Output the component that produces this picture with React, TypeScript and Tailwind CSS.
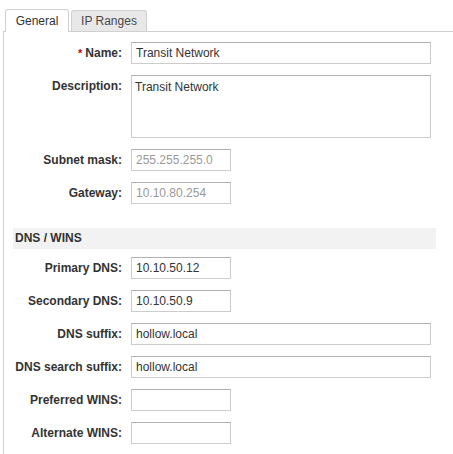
import React from 'react'

type Field = {
  label: string
  value?: string
  wide?: boolean
  disabled?: boolean
  required?: boolean
  multiline?: boolean
}

const general: Field[] = [
  { label: 'Name:', value: 'Transit Network', wide: true, required: true },
  { label: 'Description:', value: 'Transit Network', wide: true, multiline: true },
  { label: 'Subnet mask:', value: '255.255.255.0', disabled: true },
  { label: 'Gateway:', value: '10.10.80.254', disabled: true },
]

const dns: Field[] = [
  { label: 'Primary DNS:', value: '10.10.50.12' },
  { label: 'Secondary DNS:', value: '10.10.50.9' },
  { label: 'DNS suffix:', value: 'hollow.local', wide: true },
  { label: 'DNS search suffix:', value: 'hollow.local', wide: true },
  { label: 'Preferred WINS:' },
  { label: 'Alternate WINS:' },
]

const FormRow: React.FC<{ field: Field }> = ({ field }) => {
  const width = field.wide ? 'w-[300px]' : 'w-[100px]'
  const color = field.disabled ? 'text-[#999999]' : 'text-[#333333]'
  return (
    <div className="flex items-start">
      <label className="w-[118px] h-[22px] leading-[22px] text-right font-bold text-[#333333]">
        {field.required && <span className="text-[#cc0000] text-[11px] align-top mr-[3px]">*</span>}
        {field.label}
      </label>
      {field.multiline ? (
        <div
          className={`ml-[9px] ${width} h-[63px] border border-[#cccccc] border-t-[#b0b0b0] px-[3px] py-[3px] leading-[16px] ${color}`}
        >
          {field.value}
        </div>
      ) : (
        <div
          className={`ml-[9px] ${width} h-[22px] border border-[#cccccc] border-t-[#b0b0b0] pl-[4px] leading-[20px] ${color}`}
        >
          {field.value}
        </div>
      )}
    </div>
  )
}

export default function App() {
  return (
    <div
      className="w-[453px] h-[454px] bg-white overflow-hidden text-[12px]"
      style={{ fontFamily: '"Liberation Sans", Arial, sans-serif' }}
    >
      <div className="ml-[3px] h-full flex flex-col">
        {/* Tabs */}
        <div className="flex items-end pl-[2px] mt-[9px] h-[22px]">
          <div className="relative z-10 -mb-px w-[64px] h-[23px] bg-white border border-b-0 border-[#d0d0d0] rounded-t-[3px] flex items-center justify-center text-[#333333]">
            General
          </div>
          <div className="ml-[2px] w-[76px] h-[21px] bg-[#e8e8e8] border border-b-0 border-[#d0d0d0] rounded-t-[3px] flex items-center justify-center text-[#4a4a4a]">
            IP Ranges
          </div>
        </div>

        {/* Panel */}
        <div className="flex-1 border-t border-l border-[#d0d0d0]">
          <div className="flex flex-col gap-[11px] pt-[10px]">
            {general.map((f) => (
              <FormRow key={f.label} field={f} />
            ))}
          </div>

          <div className="mt-[24px] ml-[9px] w-[423px] h-[21px] bg-[#f2f2f2] pl-[2px] leading-[21px] font-bold text-[#333333]">
            DNS / WINS
          </div>

          <div className="flex flex-col gap-[11px] mt-[8px]">
            {dns.map((f) => (
              <FormRow key={f.label} field={f} />
            ))}
          </div>
        </div>
      </div>
    </div>
  )
}
